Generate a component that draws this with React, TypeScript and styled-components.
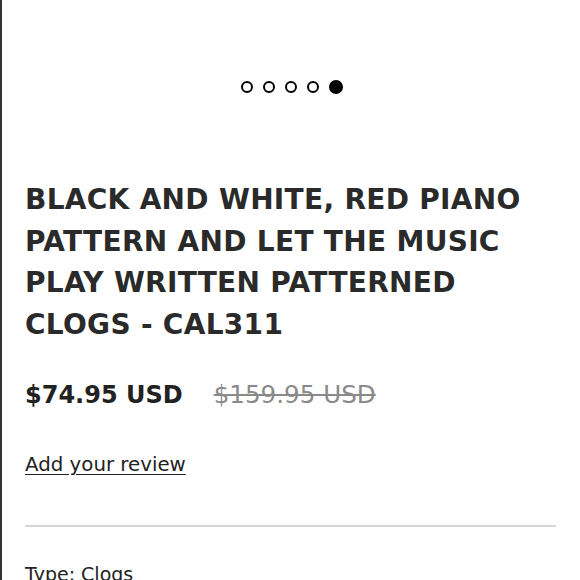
import React from 'react';
import styled, { createGlobalStyle } from 'styled-components';

const GlobalStyle = createGlobalStyle`
  html, body {
    margin: 0;
    padding: 0;
    background: #fff;
  }
  body {
    font-family: 'DejaVu Sans', 'Noto Sans', sans-serif;
    color: #222;
  }
`;

const Page = styled.div`
  width: 580px;
  height: 580px;
  overflow: hidden;
  box-sizing: border-box;
  border-left: 2px solid #333;
  padding: 77px 24px 0 23px;
`;

const Dots = styled.div`
  display: flex;
  justify-content: center;
  align-items: center;
  gap: 10px;
  height: 20px;
  padding-left: 2px;
`;

const Dot = styled.span<{ active?: boolean }>`
  box-sizing: border-box;
  width: ${({ active }) => (active ? '14px' : '12px')};
  height: ${({ active }) => (active ? '14px' : '12px')};
  border-radius: 50%;
  border: 2px solid #000;
  background: ${({ active }) => (active ? '#000' : '#fff')};
`;

const Title = styled.h1`
  margin: 82px 0 0;
  font-family: 'DejaVu Sans', sans-serif;
  font-weight: 700;
  font-size: 28px;
  line-height: 41.5px;
  letter-spacing: 0.3px;
  text-transform: uppercase;
  color: #2a2a2a;
`;

const PriceRow = styled.div`
  display: flex;
  align-items: baseline;
  gap: 31px;
  margin-top: 35px;
`;

const Price = styled.span`
  font-family: 'DejaVu Sans', sans-serif;
  font-weight: 700;
  font-size: 24px;
  color: #222;
`;

const OldPrice = styled.s`
  font-family: 'DejaVu Sans', sans-serif;
  font-size: 24.6px;
  color: #8a8a8a;
`;

const ReviewLink = styled.a`
  display: inline-block;
  margin-top: 44px;
  font-family: 'DejaVu Sans', sans-serif;
  font-size: 19.8px;
  color: #222;
  text-decoration: underline;
  text-underline-offset: 3px;
`;

const Divider = styled.hr`
  margin: 49px 0 0;
  border: 0;
  border-top: 2px solid #d6d6d6;
`;

const Meta = styled.div`
  margin-top: 36px;
  font-family: 'DejaVu Sans', sans-serif;
  font-size: 19px;
  color: #222;
`;

export default function App() {
  const slides = [false, false, false, false, true];
  return (
    <>
      <GlobalStyle />
      <Page>
        <Dots>
          {slides.map((active, i) => (
            <Dot key={i} active={active} />
          ))}
        </Dots>
        <Title>
          Black and White, Red Piano Pattern and Let the Music Play Written Patterned Clogs - CAL311
        </Title>
        <PriceRow>
          <Price>$74.95 USD</Price>
          <OldPrice>$159.95 USD</OldPrice>
        </PriceRow>
        <ReviewLink href="#">Add your review</ReviewLink>
        <Divider />
        <Meta>Type: Clogs</Meta>
      </Page>
    </>
  );
}
